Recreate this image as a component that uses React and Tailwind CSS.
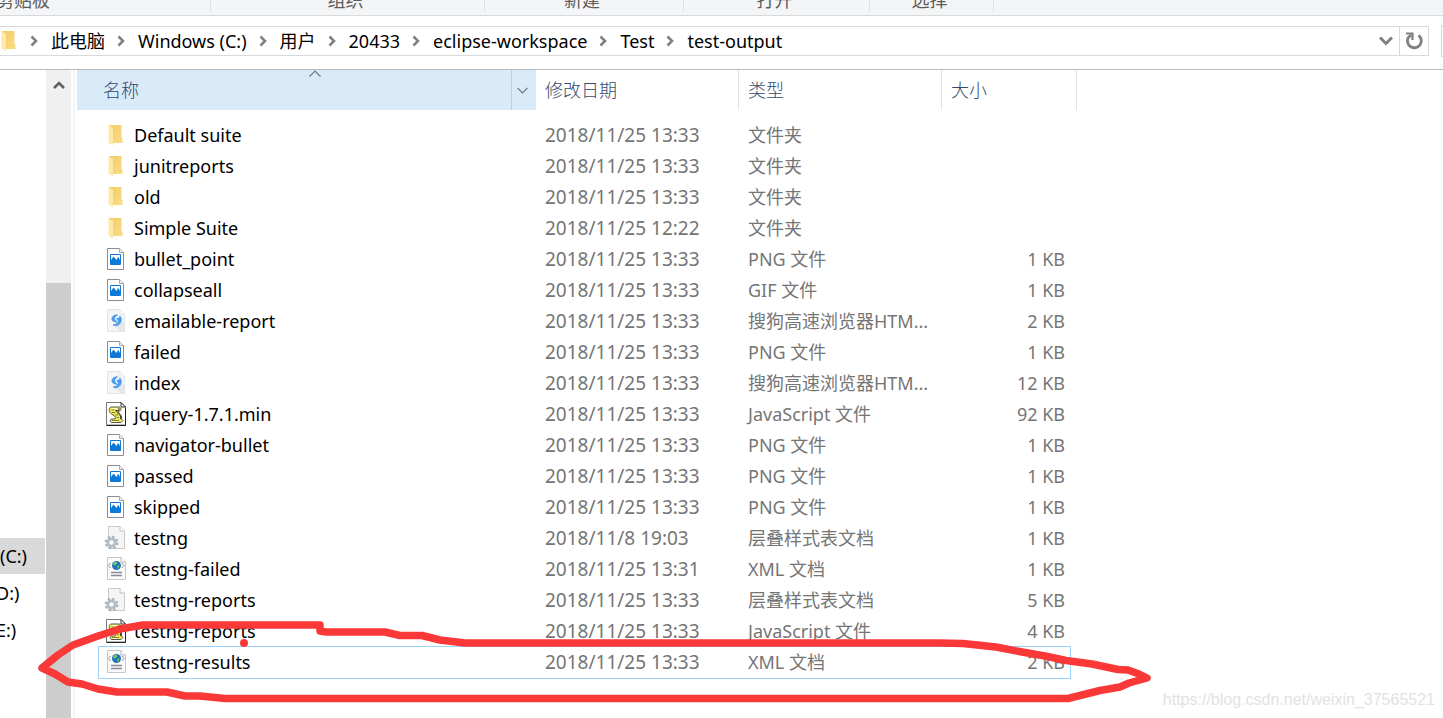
import React from "react";

function FolderIcon() {
  return (
    <svg width="18" height="22" viewBox="0 0 18 22" aria-hidden="true">
      <defs>
        <linearGradient id="fold" x1="0" y1="0" x2="1" y2="1">
          <stop offset="0" stopColor="#f0cc68" />
          <stop offset="1" stopColor="#fbdc86" />
        </linearGradient>
      </defs>
      <path d="M2 1H14.500V14H15.500V19H5Z" fill="url(#fold)" />
      <path d="M1.500 1L6 4V21.500L1.500 18.500Z" fill="#ffe9a8" />
    </svg>
  );
}

function PictureIcon() {
  return (
    <svg width="18" height="22" viewBox="0 0 18 22" aria-hidden="true">
      <path d="M.5 .5H12.500L16.500 4.500V21.500H.5Z" fill="#fff" stroke="#8c8c8c" />
      <path d="M12.500 .5V4.500H16.500" fill="#f2f2f2" stroke="#a8a8a8" />
      <path d="M3.500 6.500H13.500V16.500H3.500Z" fill="#fff" stroke="#0f78d4" />
      <path d="M4 12L6.500 8.500L9.500 12L11 9L12 10L13.500 13V16H4Z" fill="#0f78d4" />
    </svg>
  );
}

function BrowserIcon() {
  return (
    <svg width="20" height="24" viewBox="0 0 20 24" aria-hidden="true">
      <path d="M1.500 .5H14L18.500 5V22.500H1.500Z" fill="#f4f5f7" stroke="#e1e4e9" />
      <path d="M14 .5V5H18.500" fill="#fff" stroke="#e1e4e9" />
      <path d="M12 16L16 12L18 14V22H14L8 17Z" fill="#e6e8ec" />
      <path d="M11.500 6C7.500 5.500 4.800 8.500 6.500 11.500C7.500 13 9.500 12.500 10.500 13.500C10.500 11.500 8.500 11 8.500 9.500C8.500 8 10 7 11.500 6Z" fill="#4a9bee" stroke="#4a9bee" strokeWidth="1" />
      <path d="M14 7C16.500 10 15.500 15 11 16.500C9.500 17 8 16.500 7 15.800C9.500 15.800 12 14.500 12.200 12.500C12.300 11 11 10.200 10.500 9.500C12.500 10 13.500 8.500 14 7Z" fill="#4a9bee" stroke="#4a9bee" strokeWidth=".8" />
    </svg>
  );
}

function ScriptIcon() {
  return (
    <svg width="20" height="24" viewBox="0 0 20 24" aria-hidden="true">
      <path d="M.5 .5H15L19.500 5V23H.5Z" fill="#fff" stroke="#777" />
      <path d="M15 .5V5H19.500Z" fill="#fff" stroke="#333" />
      <path d="M.5 23.500H19.500V6" fill="none" stroke="#222" />
      <path d="M5 5H13C15.500 5.500 15.500 8.500 13.500 9L12 9.500L15.500 14V17L17 18.500L15 20.500H6C3.500 20 4 17 6 17H9L10 15.500L4.500 11C2.500 9 3 5.500 5 5Z" fill="#eee84e" stroke="#555" strokeWidth="1" />
      <path d="M13 6V8.500H9.500L14.500 14V17" fill="none" stroke="#444" strokeWidth="1" />
      <path d="M5.500 8H8M6 10.500H9M9 13H12M11 15.500H13M6 18.500H13" stroke="#8a852a" strokeWidth="1" />
      <path d="M6 6.500H11M7 19.500H11" stroke="#fffce0" />
    </svg>
  );
}

function GearIcon() {
  return (
    <svg width="24" height="24" viewBox="0 0 24 24" className="shrink-0" aria-hidden="true">
      <path d="M4.500 .5H16L20.500 5V22.500H4.500Z" fill="#f5f5f5" stroke="#c9c9c9" />
      <path d="M16 .5V5H20.500" fill="#fff" stroke="#c0c0c0" />
      <circle cx="7.500" cy="16.500" r="5.800" fill="none" stroke="#a4b1bb" strokeWidth="2" strokeDasharray="2.400 2.150" />
      <circle cx="7.500" cy="16.500" r="3.700" fill="#f6f8fa" stroke="#b0bdc7" strokeWidth="2.800" />
    </svg>
  );
}

function XmlIcon() {
  return (
    <svg width="20" height="24" viewBox="0 0 20 24" className="shrink-0" aria-hidden="true">
      <path d="M1.500 .5H15L19.500 5V22.500H1.500Z" fill="#fafafa" stroke="#c6c6c6" />
      <path d="M15 .5V5H19.500" fill="#fff" stroke="#b5b5b5" />
      <circle cx="10.500" cy="8.500" r="4.500" fill="#2470b8" />
      <path d="M8 5.500L10 4.500L11.500 6L9.500 8L8 8.500L7 7.500Z" fill="#6fd06a" />
      <path d="M11 8.500L13.500 8L13 11L11 12Z" fill="#49b85a" />
      <path d="M4.500 6L2.500 8.500L4.500 11M16 6L18 8.500L16 11" fill="none" stroke="#999" />
      <path d="M5 15.500H16M5 18.500H16" stroke="#8b8b9c" strokeWidth="1.300" />
    </svg>
  );
}

const ICONS = {
  folder: FolderIcon,
  picture: PictureIcon,
  browser: BrowserIcon,
  script: ScriptIcon,
  gear: GearIcon,
  xml: XmlIcon,
};

const FILES = [
  ["folder", "Default suite", "2018/11/25 13:33", "文件夹", ""],
  ["folder", "junitreports", "2018/11/25 13:33", "文件夹", ""],
  ["folder", "old", "2018/11/25 13:33", "文件夹", ""],
  ["folder", "Simple Suite", "2018/11/25 12:22", "文件夹", ""],
  ["picture", "bullet_point", "2018/11/25 13:33", "PNG 文件", "1 KB"],
  ["picture", "collapseall", "2018/11/25 13:33", "GIF 文件", "1 KB"],
  ["browser", "emailable-report", "2018/11/25 13:33", "搜狗高速浏览器HTM...", "2 KB"],
  ["picture", "failed", "2018/11/25 13:33", "PNG 文件", "1 KB"],
  ["browser", "index", "2018/11/25 13:33", "搜狗高速浏览器HTM...", "12 KB"],
  ["script", "jquery-1.7.1.min", "2018/11/25 13:33", "JavaScript 文件", "92 KB"],
  ["picture", "navigator-bullet", "2018/11/25 13:33", "PNG 文件", "1 KB"],
  ["picture", "passed", "2018/11/25 13:33", "PNG 文件", "1 KB"],
  ["picture", "skipped", "2018/11/25 13:33", "PNG 文件", "1 KB"],
  ["gear", "testng", "2018/11/8 19:03", "层叠样式表文档", "1 KB"],
  ["xml", "testng-failed", "2018/11/25 13:31", "XML 文档", "1 KB"],
  ["gear", "testng-reports", "2018/11/25 13:33", "层叠样式表文档", "5 KB"],
  ["script", "testng-reports", "2018/11/25 13:33", "JavaScript 文件", "4 KB"],
  ["xml", "testng-results", "2018/11/25 13:33", "XML 文档", "2 KB"],
];

const PATH = ["此电脑", "Windows (C:)", "用户", "20433", "eclipse-workspace", "Test", "test-output"];

function Ribbon() {
  const group = "flex shrink-0 items-end justify-center border-r border-[#e0e1e3] pr-1 pb-[2px]";
  return (
    <div className="flex h-4 overflow-hidden border-b border-[#d9dadc] bg-[#f4f5f7] pb-[3px] leading-5 text-[#5c5c5c]">
      <div className="-ml-1 flex w-[215px] shrink-0 items-end border-r border-[#e0e1e3] pb-[2px]">剪贴板</div>
      <div className={group + " w-[274px]"}>组织</div>
      <div className={group + " w-[199px]"}>新建</div>
      <div className={group + " w-[186px]"}>打开</div>
      <div className={group + " w-[124px]"}>选择</div>
    </div>
  );
}

function AddressBar() {
  return (
    <div className="flex h-[54px] items-center border-b border-[#b9b9b9] pb-[3px]">
      <nav className="flex h-[30px] min-w-0 flex-1 items-center border-y border-[#d9d9d9]">
        <FolderIcon />
        <ol className="flex min-w-0 flex-1 items-center whitespace-nowrap">
          {PATH.map((p) => (
            <li key={p} className="flex items-center">
              <svg width="9" height="12" viewBox="0 0 9 12" className="mx-3 shrink-0" aria-hidden="true">
                <path d="M1.500 1.500L6 6L1.500 10.500" fill="none" stroke="#808080" strokeWidth="2.600" />
              </svg>
              <a href="#path" className="text-black">{p}</a>
            </li>
          ))}
        </ol>
        <button aria-label="历史记录" className="flex h-7 w-[27px] items-center justify-center">
          <svg width="14" height="10" viewBox="0 0 14 10" aria-hidden="true">
            <path d="M1 1.500L7 7.500L13 1.500" fill="none" stroke="#808080" strokeWidth="3" />
          </svg>
        </button>
        <button aria-label="刷新" className="flex h-7 w-[30px] items-center justify-center border-x border-[#d9d9d9]">
          <svg width="18" height="18" viewBox="0 0 18 18" aria-hidden="true">
            <path d="M13.500 3.300A6.900 6.900 0 1 1 3.300 5.500L6 3" fill="none" stroke="#808080" strokeWidth="2.800" />
            <path d="M1 1.500H7.500V8" fill="none" stroke="#808080" strokeWidth="2.200" />
          </svg>
        </button>
      </nav>
      <div className="ml-3 h-8 w-[2px] border-y border-l border-[#d9d9d9]" />
    </div>
  );
}

function Sidebar() {
  const item = "flex h-9 items-center";
  return (
    <>
      <nav className="flex w-[45px] shrink-0 flex-col gap-px overflow-hidden pt-[468px] text-black">
        <a href="#c" className={item + " bg-[#d9d9d9]"}>(C:)</a>
        <a href="#d" className={item + " -ml-1"}>D:)</a>
        <a href="#e" className={item + " -ml-1"}>E:)</a>
      </nav>
      <div className="ml-[1px] flex w-[25px] shrink-0 flex-col bg-[#f0f0f0]">
        <button aria-label="向上滚动" className="flex h-[30px] items-center justify-center">
          <svg width="12" height="10" viewBox="0 0 12 10" aria-hidden="true">
            <path d="M1 8L6 3L11 8" fill="none" stroke="#606060" strokeWidth="2.600" />
          </svg>
        </button>
        <div className="mt-[183px] flex-1 bg-[#cdcdcd]" />
      </div>
      <div className="ml-[2px] w-[4px] shrink-0 border-l-2 border-[#f5f5f5]" />
    </>
  );
}

function FileTable() {
  const head = "h-10 p-0 pl-[9px] text-left font-light text-[#34496b]";
  return (
    <table className="w-[1000px] table-fixed border-separate border-spacing-0 self-start">
      <colgroup>
        <col className="w-[459px]" />
        <col className="w-[203px]" />
        <col className="w-[203px]" />
        <col className="w-[135px]" />
      </colgroup>
      <thead>
        <tr>
          <th className="h-10 bg-[#d9eaf8] p-0 text-left font-light text-[#34496b]">
            <div className="relative flex h-10 items-center pl-[26px]">
              <svg width="12" height="8" viewBox="0 0 12 8" className="absolute left-[232px] top-0" aria-hidden="true">
                <path d="M.5 6.500L6 1L11.500 6.500" fill="none" stroke="#6b7785" strokeWidth="1.200" />
              </svg>
              <span className="flex-1">名称</span>
              <button aria-label="筛选" className="flex h-10 w-[25px] items-center justify-center border-l border-[#bccddd] pr-1">
                <svg width="11" height="7" viewBox="0 0 11 7" aria-hidden="true">
                  <path d="M.5 .8L5.500 5.800L10.500 .8" fill="none" stroke="#6b7785" strokeWidth="1.200" />
                </svg>
              </button>
            </div>
          </th>
          <th className={head + " border-r border-[#e4e4e4]"}>修改日期</th>
          <th className={head + " border-r border-[#e4e4e4]"}>类型</th>
          <th className={head + " border-r border-[#e4e4e4]"}>大小</th>
        </tr>
      </thead>
      <tbody className="before:block before:h-[9px] before:content-['']">
        {FILES.map(([kind, name, date, type, size], i) => {
          const Icon = ICONS[kind];
          return (
            <tr key={i}>
              <td className="relative h-[31px] p-0">
                <div className="flex items-center gap-2 pl-7">
                  <span className="flex w-[21px] items-center justify-center"><Icon /></span>
                  <span className="text-black">{name}</span>
                </div>
                {i === FILES.length - 1 && (
                  <span className="absolute top-0 left-[21px] h-[33px] w-[973px] border border-[#99d1ff]" />
                )}
              </td>
              <td className="p-0 pl-[9px] text-[19px]">{date}</td>
              <td className="whitespace-nowrap p-0 pl-[9px]">{type}</td>
              <td className="p-0 pr-3 text-right">{size}</td>
            </tr>
          );
        })}
      </tbody>
    </table>
  );
}

export default function App() {
  return (
    <div className="relative flex min-h-screen flex-col overflow-hidden bg-white font-['Noto_Sans','Noto_Sans_CJK_SC',sans-serif] text-[18px] leading-6 text-[#757575]">
      <Ribbon />
      <AddressBar />
      <main className="flex flex-1">
        <Sidebar />
        <FileTable />
      </main>
      <svg width="1160" height="718" viewBox="0 0 1160 718" className="pointer-events-none absolute left-0 top-0" aria-hidden="true">
        <path
          d="M42 668L58 655L73 645L98 636L120 629L143 625H320V631L326 632H385L400 635.500H422L440 640L465 643H940L963 643.500L996 647L1022 652L1045 656L1066 660.500L1092 664L1118 669.500L1128 670L1139 674L1147 678L1129 683L1120 687L1100 690.500L1068 698.500H225L200 696H185L167 692H117L98 689L82 684L68 682L55 674Z"
          fill="none" stroke="#fb3838" strokeWidth="7.500" strokeLinejoin="round" strokeLinecap="round"
        />
        <circle cx="244" cy="643" r="4" fill="#fb3838" />
      </svg>
      <p className="absolute bottom-2 right-2 font-['Liberation_Sans',sans-serif] text-[16px] leading-5 text-[#e2e2e2]">
        https://blog.csdn.net/weixin_37565521
      </p>
    </div>
  );
}
